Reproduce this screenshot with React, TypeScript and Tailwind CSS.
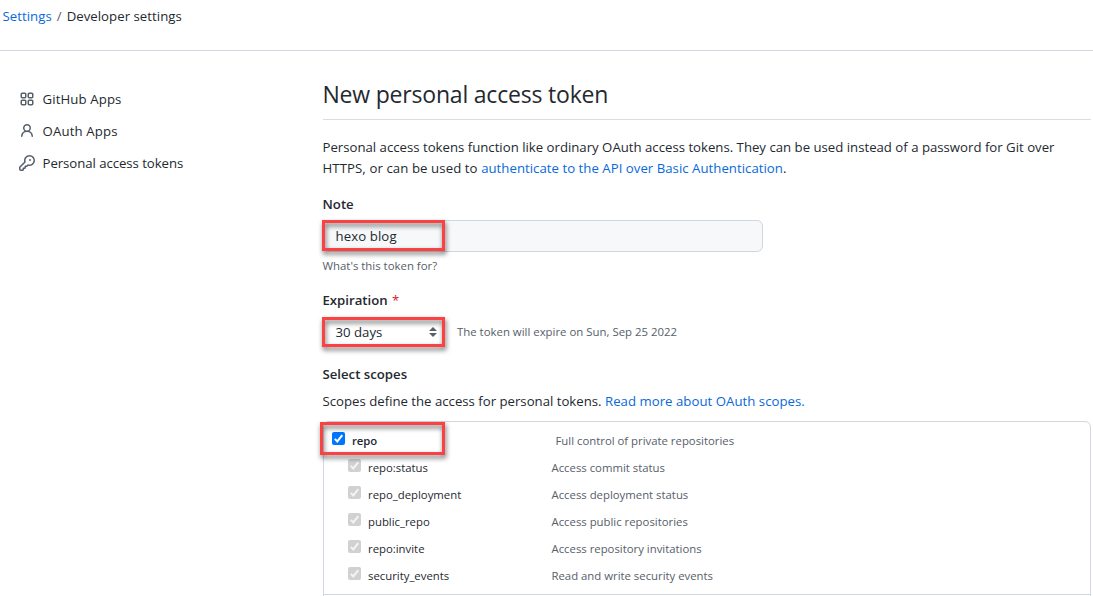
import React from "react";

const navItems = [
  {
    label: "GitHub Apps",
    tracking: "tracking-[0.12px]",
    path: "M1.5 3.25c0-.966.784-1.75 1.75-1.75h2.5c.966 0 1.75.784 1.75 1.75v2.5A1.75 1.75 0 0 1 5.75 7.5h-2.5A1.75 1.75 0 0 1 1.5 5.75ZM3.25 3a.25.25 0 0 0-.25.25v2.5c0 .138.112.25.25.25h2.5A.25.25 0 0 0 6 5.75v-2.5A.25.25 0 0 0 5.75 3ZM8.5 3.25c0-.966.784-1.75 1.75-1.75h2.5c.966 0 1.75.784 1.75 1.75v2.5a1.75 1.75 0 0 1-1.75 1.75h-2.5A1.75 1.75 0 0 1 8.5 5.75ZM10.25 3a.25.25 0 0 0-.25.25v2.5c0 .138.112.25.25.25h2.5a.25.25 0 0 0 .25-.25v-2.5a.25.25 0 0 0-.25-.25ZM1.5 10.25c0-.966.784-1.75 1.75-1.75h2.5c.966 0 1.75.784 1.75 1.75v2.5a1.75 1.75 0 0 1-1.75 1.75h-2.5a1.75 1.75 0 0 1-1.75-1.75ZM3.25 10a.25.25 0 0 0-.25.25v2.5c0 .138.112.25.25.25h2.5a.25.25 0 0 0 .25-.25v-2.5a.25.25 0 0 0-.25-.25ZM8.5 10.25c0-.966.784-1.75 1.75-1.75h2.5c.966 0 1.75.784 1.75 1.75v2.5a1.75 1.75 0 0 1-1.75 1.75h-2.5a1.75 1.75 0 0 1-1.75-1.75ZM10.25 10a.25.25 0 0 0-.25.25v2.5c0 .138.112.25.25.25h2.5a.25.25 0 0 0 .25-.25v-2.5a.25.25 0 0 0-.25-.25Z",
  },
  {
    label: "OAuth Apps",
    tracking: "tracking-[0.16px]",
    path: "M10.561 8.073a6.005 6.005 0 0 1 3.432 5.142.75.75 0 1 1-1.498.07 4.5 4.5 0 0 0-8.99 0 .75.75 0 0 1-1.498-.07 6.004 6.004 0 0 1 3.431-5.142 3.999 3.999 0 1 1 5.123 0ZM10.5 5a2.5 2.5 0 1 0-5 0 2.5 2.5 0 0 0 5 0Z",
  },
  {
    label: "Personal access tokens",
    tracking: "tracking-[-0.05px]",
    path: "M10.5 0a5.499 5.499 0 1 1-1.288 10.848l-.932.932a.749.749 0 0 1-.53.22H7v.75a.749.749 0 0 1-.22.53l-.5.5a.749.749 0 0 1-.53.22H5v.75a.749.749 0 0 1-.22.53l-.5.5a.749.749 0 0 1-.53.22h-2A1.75 1.75 0 0 1 0 14.25v-2c0-.199.079-.389.22-.53l4.932-4.932A5.5 5.5 0 0 1 10.5 0Zm-4 5.5c-.001.431.069.86.205 1.269a.75.75 0 0 1-.181.768L1.5 12.56v1.69c0 .138.112.25.25.25h1.69l.06-.06v-1.19a.75.75 0 0 1 .75-.75h1.19l.06-.06v-1.19a.75.75 0 0 1 .75-.75h1.19l1.023-1.025a.75.75 0 0 1 .768-.18A4 4 0 1 0 6.5 5.5ZM11 6a1 1 0 1 1 0-2 1 1 0 0 1 0 2Z",
  },
];

const scopes = [
  { name: "repo:status", text: "Access commit status" },
  { name: "repo_deployment", text: "Access deployment status" },
  { name: "public_repo", text: "Access public repositories" },
  { name: "repo:invite", text: "Access repository invitations" },
  { name: "security_events", text: "Read and write security events" },
];

function Check({ disabled = false }: { disabled?: boolean }) {
  return (
    <svg width="13" height="13" viewBox="0 0 13 13" className="shrink-0">
      <rect width="13" height="13" rx="2" fill={disabled ? "#d1d1d1" : "#0075ff"} />
      <path d="M2.8 6.9 5.3 9.4 10.3 3.1" fill="none" stroke={disabled ? "#f4f4f4" : "#fff"} strokeWidth="2" />
    </svg>
  );
}

function Highlight({ className }: { className: string }) {
  return (
    <div
      className={`pointer-events-none absolute border-3 border-[#fb4141] drop-shadow-[1px_3px_2.5px_rgba(0,0,0,0.6)] ${className}`}
    />
  );
}

export default function App() {
  return (
    <div className="h-[596px] w-[1093px] overflow-hidden bg-white font-['Open_Sans','Noto_Sans',sans-serif] text-[13.2px] text-[#24292f]">
      <header className="flex h-[51px] items-start border-b border-[#d0d7de] pt-[6px] pl-[2.5px] leading-5 tracking-[0.04px] whitespace-pre">
        <a className="text-[#0969da]">Settings</a>
        <span className="mx-[5px] text-[#57606a]">/</span>
        <span>Developer settings</span>
      </header>

      <div className="flex">
        <nav className="flex w-[322.5px] shrink-0 flex-col gap-3 pt-[38px] pl-[19px]">
          {navItems.map((item) => (
            <a key={item.label} className="flex h-5 items-center gap-[7.5px]">
              <svg width="16" height="16" viewBox="0 0 16 16" fill="#57606a">
                <path d={item.path} />
              </svg>
              <span className={`leading-5 ${item.tracking}`}>{item.label}</span>
            </a>
          ))}
        </nav>

        <main className="w-[768.5px] shrink-0">
          <h1 className="h-[69px] border-b border-[#d8dee4] pt-[25px] text-[23px] leading-9 tracking-[-0.2px] whitespace-nowrap">
            New personal access token
          </h1>

          <p className="mt-[17px] leading-[21px] whitespace-nowrap">
            <span>Personal access tokens function like ordinary OAuth access tokens. They can be used instead of a password for Git over</span>
            <br />
            <span className="tracking-[0.09px]">HTTPS, or can be used to </span>
            <a className="tracking-[0.03px] text-[#0969da]">authenticate to the API over Basic Authentication</a>.
          </p>

          <label className="mt-[15px] block leading-5 font-semibold">Note</label>
          <div className="relative mt-[6px] ml-[0.5px] flex h-8 w-[440px] items-center rounded-md border border-[#d0d7de] bg-[#f6f8fa] pl-[11.5px]">
            <span className="pt-[2px] tracking-[0.1px]">hexo blog</span>
            <Highlight className="-top-[1px] -left-[2px] h-[31px] w-[123px]" />
          </div>
          <p className="mt-[5px] text-[11.4px] leading-[18px] text-[#57606a]">What's this token for?</p>

          <label className="mt-[15px] block leading-5 font-semibold">
            Expiration <span className="ml-[1px] font-normal text-[#cf222e]">*</span>
          </label>
          <div className="mt-[6px] ml-[0.5px] flex h-8 items-center">
            <div className="relative flex h-8 w-[121px] items-center justify-between rounded-md pr-[7px] pl-[12.5px]">
              <span className="pt-[2px]">30 days</span>
              <svg width="8" height="10" viewBox="0 0 8 10" fill="#57606a">
                <path d="M0 4 4 0 8 4ZM0 6 4 10 8 6Z" />
              </svg>
              <Highlight className="top-[1px] -left-[1px] h-[30px] w-[123px]" />
            </div>
            <span className="ml-[13px] text-[11.4px] text-[#57606a]">The token will expire on Sun, Sep 25 2022</span>
          </div>

          <h2 className="mt-4 leading-5 font-semibold">Select scopes</h2>
          <p className="mt-[7px] leading-5">
            <span>Scopes define the access for personal tokens. </span>
            <a className="tracking-[0.03px] text-[#0969da]">Read more about OAuth scopes.</a>
          </p>

          <section className="relative mt-[10px] ml-[0.5px] h-[190px] rounded-t-md border border-[#d0d7de] text-[11.35px]">
            <div className="h-[173px] border-b border-[#d0d7de] pt-[5px]">
              <div className="flex h-[27px] items-center pl-[8px]">
                <div className="flex w-[223.5px] items-center gap-[7px]">
                  <div className="-mt-[4px]">
                    <Check />
                  </div>
                  <span className="leading-4 font-semibold tracking-[-0.1px]">repo</span>
                </div>
                <span className="leading-4 text-[#57606a]">Full control of private repositories</span>
              </div>
              {scopes.map((scope) => (
                <div key={scope.name} className="flex h-[27px] items-center pl-[24px]">
                  <div className="flex w-[203.5px] items-center gap-[7px]">
                    <div className="-mt-[4px]">
                      <Check disabled />
                    </div>
                    <span className="leading-4">{scope.name}</span>
                  </div>
                  <span className="leading-4 text-[#57606a]">{scope.text}</span>
                </div>
              ))}
            </div>
            <Highlight className="top-0 -left-[4px] h-[33px] w-[125px]" />
          </section>
        </main>
      </div>
    </div>
  );
}
